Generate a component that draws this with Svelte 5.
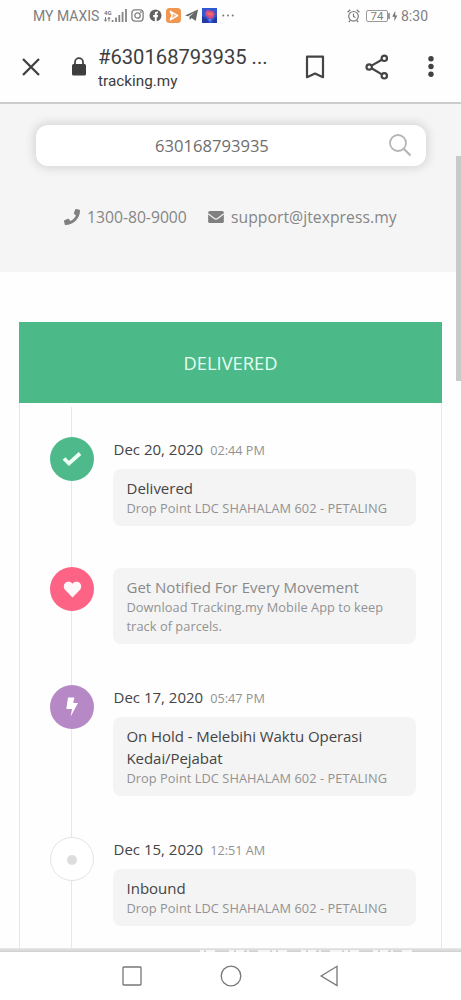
<script>
  const dropPoint = 'Drop Point LDC SHAHALAM 602 - PETALING';
  const events = [
    { kind: 'done', date: 'Dec 20, 2020', time: '02:44 PM', title: 'Delivered', note: dropPoint },
    { kind: 'heart', title: 'Get Notified For Every Movement', note: 'Download Tracking.my Mobile App to keep track of parcels.' },
    { kind: 'bolt', date: 'Dec 17, 2020', time: '05:47 PM', title: 'On Hold - Melebihi Waktu Operasi Kedai/Pejabat', note: dropPoint },
    { kind: 'dot', date: 'Dec 15, 2020', time: '12:51 AM', title: 'Inbound', note: dropPoint }
  ];
</script>

<div class="phone">
  <div class="status">
    <span class="carrier">MY MAXIS</span>
    <svg class="signal" width="23" height="14" viewBox="0 0 23 14">
      <text x="0" y="6" class="tiny">4G</text>
      <path d="M1.5 8v4M.3 10.5l1.2 1.8 1.3-1.8M5 12.5v-4M3.8 10 5 8.3 6.2 10" stroke="#777" fill="none" />
      <path d="M8.6 11v2M12 8.5V13M15.3 6v7M18.6 3v10M22 0v13" stroke="#858585" stroke-width="1.8" />
    </svg>
    <svg class="insta" width="13" height="13" viewBox="0 0 13 13" fill="none" stroke="#808080" stroke-width="1.3">
      <rect x=".9" y=".9" width="11.2" height="11.2" rx="3" /><circle cx="6.5" cy="6.5" r="2.7" /><circle cx="9.8" cy="3.2" r=".3" />
    </svg>
    <svg class="fb" width="13" height="13" viewBox="0 0 13 13">
      <circle cx="6.5" cy="6.5" r="6" fill="#626262" /><path d="M5.8 13V8.2H4.2V6.1h1.6V4.8c0-1.9 1.2-2.7 3.2-2.3v1.8c-1 0-1.3.2-1.3.8v1h1.4l-.3 2.1H7.7V13" fill="#fff" />
    </svg>
    <svg class="play" width="15" height="15" viewBox="0 0 15 15">
      <rect width="15" height="15" rx="3.5" fill="#f19650" /><path d="M4.3 3.3 11.7 7.6 4.3 11.8 6.1 7.6Z" fill="#f6b17c" stroke="#fff" stroke-width="1.4" stroke-linejoin="round" />
    </svg>
    <svg class="plane" width="13" height="13" viewBox="0 0 13 13"><path d="M0 6.5 13 .5 10.7 12 6.6 9 4.8 11 4.3 7.8 9.7 3.2 3.1 7.3Z" fill="#666" /></svg>
    <svg class="game" width="15" height="15" viewBox="0 0 15 15">
      <rect width="15" height="15" fill="#3158d0" /><path d="M0 15V8l5 3 2 4M15 15V8l-4 4-1 3" fill="#233aa2" /><path d="M3 5 5 2l6 1 2 3-2 4-3 1-4-3Z" fill="#d34c85" /><path d="m5 4 6 1-1 3-4-1Z" fill="#f06b65" /><path d="M6 11h4l-2 3Z" fill="#6381ee" />
    </svg>
    <svg class="more" width="12" height="3" viewBox="0 0 12 3" fill="#777"><circle cx="1.3" cy="1.5" r="1" /><circle cx="6" cy="1.5" r="1" /><circle cx="10.7" cy="1.5" r="1" /></svg>
    <svg class="alarm" width="13" height="14" viewBox="0 0 13 14" fill="none" stroke="#777" stroke-width="1.2">
      <circle cx="6.5" cy="7.3" r="4.8" /><path d="M6.5 4.5v3l2 1M.6 3.2 3.3.8M12.4 3.2 9.7.8M3.2 11.3l-1.4 1.8M9.8 11.3l1.4 1.8" />
    </svg>
    <span class="battery">74</span>
    <svg class="charge" width="10" height="14" viewBox="0 0 10 14"><path d="M1 4v6" stroke="#777" stroke-width="1.5" /><path d="M7.2 1.8 4.2 7.7h2.3l-.3 4.5 3.2-5.7H7.3Z" fill="#777" /></svg>
    <span class="clock">8:30</span>
  </div>

  <header>
    <svg class="close" width="20" height="20" viewBox="0 0 20 20"><path d="m2 2 16 16M18 2 2 18" stroke="#414141" stroke-width="2.3" /></svg>
    <svg class="lock" width="16" height="19" viewBox="0 0 16 19"><path d="M4 8V5.2a4 4 0 0 1 8 0V8" fill="none" stroke="#444" stroke-width="1.8" /><rect x="1" y="7" width="14" height="11.5" rx="1.5" fill="#3e3e3e" /></svg>
    <div class="address"><span class="page">#630168793935 ...</span><span class="host">tracking.my</span></div>
    <svg class="bookmark" width="20" height="24" viewBox="0 0 20 24"><path d="M2 1.7h16v20.5l-8-3.6-8 3.6Z" fill="none" stroke="#444" stroke-width="2.2" stroke-linejoin="round" /></svg>
    <svg class="share" width="24" height="26" viewBox="0 0 24 26" fill="none" stroke="#444" stroke-width="2.2"><path d="M7 11.4 16.4 6M7 14.5l9.4 5.6" /><circle cx="4.2" cy="13" r="2.7" /><circle cx="19.3" cy="4.3" r="2.7" /><circle cx="19.3" cy="21.8" r="2.7" /></svg>
    <svg class="kebab" width="6" height="21" viewBox="0 0 6 21" fill="#414141"><circle cx="3" cy="2.8" r="2.7" /><circle cx="3" cy="10.5" r="2.7" /><circle cx="3" cy="18.2" r="2.7" /></svg>
  </header>

  <main>
    <section class="lookup">
      <div class="search">
        <span>630168793935</span>
        <svg width="24" height="24" viewBox="0 0 24 24" fill="none" stroke="#b5b5b5" stroke-width="1.8"><circle cx="10" cy="9" r="8" /><path d="m15.5 14.5 7 7" stroke-width="2.2" /></svg>
      </div>
      <div class="contact">
        <svg width="16" height="16" viewBox="0 0 512 512" fill="#808080"><path d="M493.4 24.6l-104-24c-11.3-2.6-22.9 3.3-27.5 13.9l-48 112c-4.2 9.8-1.4 21.3 6.9 28l60.6 49.6c-36 76.7-98.9 140.5-177.2 177.2l-49.6-60.6c-6.8-8.3-18.2-11.1-28-6.9l-112 48C3.9 366.5-2 378.1.6 389.4l24 104C27.1 504.2 36.7 512 48 512c256.1 0 464-207.5 464-464 0-11.2-7.7-20.9-18.6-23.4z" /></svg>
        <span class="tel">1300-80-9000</span>
        <svg class="mail" width="16" height="12" viewBox="0 0 17 13"><rect width="17" height="13" rx="1.7" fill="#808080" /><path d="m0 3 6.7 5.1q1.8 1.3 3.6 0L17 3" fill="none" stroke="#f4f4f4" stroke-width="1.2" /></svg>
        <span class="email">support@jtexpress.my</span>
      </div>
      <div class="scroll"></div>
    </section>

    <section class="tracking">
      <h1>DELIVERED</h1>
      <div class="timeline">
        {#each events as event}
          <article class={event.kind}>
            <div class="marker">
              {#if event.kind === 'done'}
                <svg width="20" height="16" viewBox="0 0 20 16"><path d="m2 7.5 5 5L18 2.5" fill="none" stroke="#effff7" stroke-width="3.8" /></svg>
              {:else if event.kind === 'heart'}
                <svg width="19" height="17" viewBox="0 0 20 18"><path d="M10 17.5 2 9.3C.3 7.4.4 4 2.2 2.1c2-2 5.4-1.8 7.2.1l.6.7.6-.7c1.8-1.9 5.2-2.1 7.2-.1 1.8 1.9 1.9 5.3.2 7.2Z" fill="#fff8fb" /></svg>
              {:else if event.kind === 'bolt'}
                <svg width="14" height="20" viewBox="0 0 14 20"><path d="M3 .5h6.4L8.2 6H13L5.7 19.5 7 12H1.3Z" fill="#fff" /></svg>
              {:else}<i></i>{/if}
            </div>
            <div class="content">
              {#if event.date}<div class="when">{event.date}<small>{event.time}</small></div>{/if}
              <div class="card"><h2>{event.title}</h2><p>{event.note}</p></div>
            </div>
          </article>
        {/each}
      </div>
    </section>
  </main>

  <div class="edge"><svg width="212" height="2" viewBox="0 0 212 2"><path d="M0 1h212" stroke="#f6f6f6" stroke-width="2" stroke-dasharray="4 2 9 14 5 2 8 3 2 9 12 2" /></svg></div>
  <nav>
    <svg width="20" height="20" viewBox="0 0 20 20"><rect x="1" y="1" width="18" height="18" rx=".7" fill="none" stroke="#777" stroke-width="1.3" /></svg>
    <svg width="22" height="22" viewBox="0 0 22 22"><circle cx="11" cy="11" r="9.8" fill="none" stroke="#777" stroke-width="1.3" /></svg>
    <svg width="19" height="22" viewBox="0 0 19 22"><path d="M17 1.3v19.2L1.2 11Z" fill="none" stroke="#777" stroke-width="1.3" /></svg>
  </nav>
</div>

<style>
  :global(body) { margin: 0; background: #fff; }
  * { box-sizing: border-box; }
  svg { display: block; flex: none; overflow: visible; }
  .phone { width: 461px; height: 1000px; display: flex; flex-direction: column; overflow: hidden; background: #fefefe; font-family: "Open Sans", sans-serif; }
  .status { height: 31px; flex: none; display: flex; align-items: center; padding: 0 33px; font: 14px Roboto, sans-serif; color: #808080; white-space: nowrap; }
  .carrier { width: 70px; }
  .signal { margin-left: 1px; }
  .tiny { font: bold 6px Roboto, sans-serif; fill: #777; }
  .insta { margin-left: 4px; }
  .fb { margin-left: 5px; }
  .play { margin-left: 4px; }
  .plane { margin-left: 4px; }
  .game { margin-left: 4px; }
  .more { margin-left: 5px; }
  .alarm { margin-left: auto; }
  .battery { width: 22px; height: 12px; margin-left: 6px; border: 1px solid #999; border-radius: 2px; font-size: 11.5px; line-height: 11px; text-align: center; }
  .clock { margin-left: 3px; }
  header { height: 73px; flex: none; display: flex; align-items: center; padding: 0 27px 0 21px; border-bottom: 2px solid #ccc; color: #3d3d3d; }
  .lock { margin-left: 30px; }
  .address { width: 180px; margin-left: 11px; padding-top: 4px; display: flex; flex-direction: column; font-family: Roboto, sans-serif; white-space: nowrap; }
  .page { font-size: 20.2px; line-height: 25px; }
  .host { font-size: 15.3px; line-height: 22px; }
  .bookmark { margin-left: 27px; }
  .share { margin-left: 40px; }
  .kebab { margin-left: auto; }
  main { height: 844px; flex: none; overflow: hidden; }
  .lookup { height: 168px; position: relative; padding: 21px 36px 0; background: #f5f5f5; }
  .search { width: 390px; height: 41px; padding: 0 14px 0 119px; display: flex; align-items: center; justify-content: space-between; border-radius: 12px; background: #fff; box-shadow: 0 0 8px 3px #dadada; color: #6e6e6e; font-size: 16.6px; }
  .contact { height: 24px; margin-top: 39px; margin-left: 28px; display: flex; align-items: center; color: #858585; font-size: 15.7px; white-space: nowrap; }
  .tel { width: 100px; margin-left: 7px; }
  .mail { margin-left: 21px; }
  .email { margin-left: 7px; letter-spacing: .05px; }
  .scroll { position: absolute; right: 0; top: 52px; width: 5px; height: 225px; background: #c9c9c9; z-index: 1; }
  .tracking { margin: 50px 19px 0; border: 1px solid #e7e7e7; border-top: 0; }
  h1 { height: 81px; margin: 0 -1px; background: #4cba88; color: #e4fff1; font-size: 18.3px; line-height: 81px; font-weight: 400; text-align: center; }
  .timeline { height: 570px; padding: 34px 25px 0 30px; background: linear-gradient(#e7e7e7, #e7e7e7) 51px 4px / 1px 100% no-repeat; }
  article { display: flex; align-items: flex-start; }
  .done { height: 130px; }
  .heart { height: 118px; }
  .bolt { height: 152px; }
  .marker { width: 44px; height: 44px; flex: none; display: grid; place-items: center; border-radius: 50%; background: #4eba8b; }
  .heart .marker { background: #fc6384; }
  .bolt .marker { background: #b689c6; }
  .dot .marker { background: #fff; border: 1px solid #e4e4e4; }
  .dot i { width: 10px; height: 10px; margin-top: 2px; border-radius: 50%; background: #ddd; }
  .content { width: 303px; margin-left: 19px; }
  .when { height: 32px; padding-left: .5px; color: #444; font-size: 15px; line-height: 24px; white-space: nowrap; }
  small { margin-left: 7px; font-size: 12.7px; color: #929292; }
  .card { padding: 8px 12px 8px 13.5px; border-radius: 8px; background: #f4f4f4; }
  h2 { margin: 0; font-size: 15px; line-height: 22px; font-weight: 400; color: #444; }
  p { margin: 0; font-size: 12.8px; line-height: 19px; letter-spacing: .05px; color: #929292; }
  .heart .card { margin-top: 1px; }
  .heart h2 { color: #898989; }
  .bolt h2 { letter-spacing: -.06px; }
  .edge { height: 4px; flex: none; padding: 2px 0 0 200px; background: linear-gradient(#e8e8e8, #cfcfcf); }
  nav { height: 48px; flex: none; background: #fff; display: flex; align-items: center; justify-content: center; gap: 78px; }
</style>
